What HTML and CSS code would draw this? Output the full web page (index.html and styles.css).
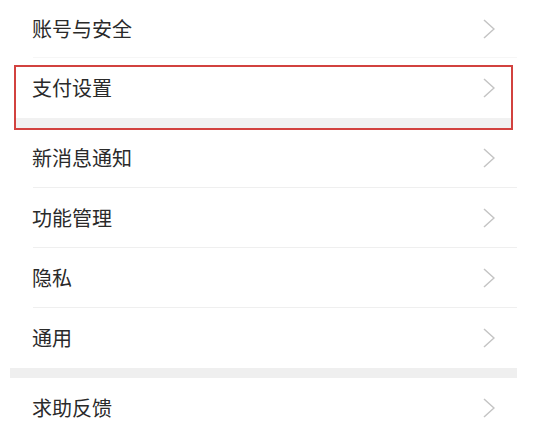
FILE: index.html
```html
<!DOCTYPE html>
<html lang="zh-CN">
<head>
<meta charset="utf-8">
<title>设置</title>
<link rel="stylesheet" href="styles.css">
</head>
<body>
<div class="page">
  <div class="card">
    <div class="row first"><span class="label">账号与安全</span><svg class="chev" viewBox="0 0 12 20"><path d="M1 1 L11 10 L1 19"/></svg></div>
    <div class="highlight-wrap">
      <div class="row nodiv"><span class="label">支付设置</span><svg class="chev" viewBox="0 0 12 20"><path d="M1 1 L11 10 L1 19"/></svg></div>
      <div class="band inner"></div>
      <div class="mark"></div>
    </div>
    <div class="row"><span class="label">新消息通知</span><svg class="chev" viewBox="0 0 12 20"><path d="M1 1 L11 10 L1 19"/></svg></div>
    <div class="row"><span class="label">功能管理</span><svg class="chev" viewBox="0 0 12 20"><path d="M1 1 L11 10 L1 19"/></svg></div>
    <div class="row"><span class="label">隐私</span><svg class="chev" viewBox="0 0 12 20"><path d="M1 1 L11 10 L1 19"/></svg></div>
    <div class="row nodiv"><span class="label">通用</span><svg class="chev" viewBox="0 0 12 20"><path d="M1 1 L11 10 L1 19"/></svg></div>
    <div class="band"></div>
    <div class="row"><span class="label">求助反馈</span><svg class="chev" viewBox="0 0 12 20"><path d="M1 1 L11 10 L1 19"/></svg></div>
  </div>
</div>
</body>
</html>
```

FILE: styles.css
```css
html, body {
  margin: 0;
  padding: 0;
  background: #ffffff;
}
body {
  font-family: "Noto Sans CJK SC", "Noto Sans", sans-serif;
  color: #2a2a2a;
  overflow: hidden;
}
.page {
  padding: 0 16px 0 10px;
}
.card {
  background: #ffffff;
  display: flex;
  flex-direction: column;
}
.row {
  height: 60px;
  display: flex;
  align-items: center;
  justify-content: space-between;
  padding: 0 22px 0 22px;
  position: relative;
  box-sizing: border-box;
}
.row.first {
  height: 58px;
}
.row::after {
  content: "";
  position: absolute;
  left: 23px;
  right: 0;
  bottom: 0;
  height: 1px;
  background: #efefef;
}
.row.first::after {
  background: #f6f6f6;
}
.row.nodiv::after {
  display: none;
}
.label {
  font-size: 20px;
  line-height: 1;
}
.chev {
  width: 12px;
  height: 20px;
  flex: none;
}
.chev path {
  fill: none;
  stroke: #c4c4c4;
  stroke-width: 1.5;
}
.band {
  height: 10px;
  background: #efefef;
}
.band.inner {
  margin: 0 5px;
  background: #f1f1f1;
}
.highlight-wrap {
  position: relative;
}
.mark {
  position: absolute;
  left: 4px;
  top: 7px;
  width: 499px;
  height: 65px;
  box-sizing: border-box;
  border: 2px solid #d2423f;
  pointer-events: none;
}
```
